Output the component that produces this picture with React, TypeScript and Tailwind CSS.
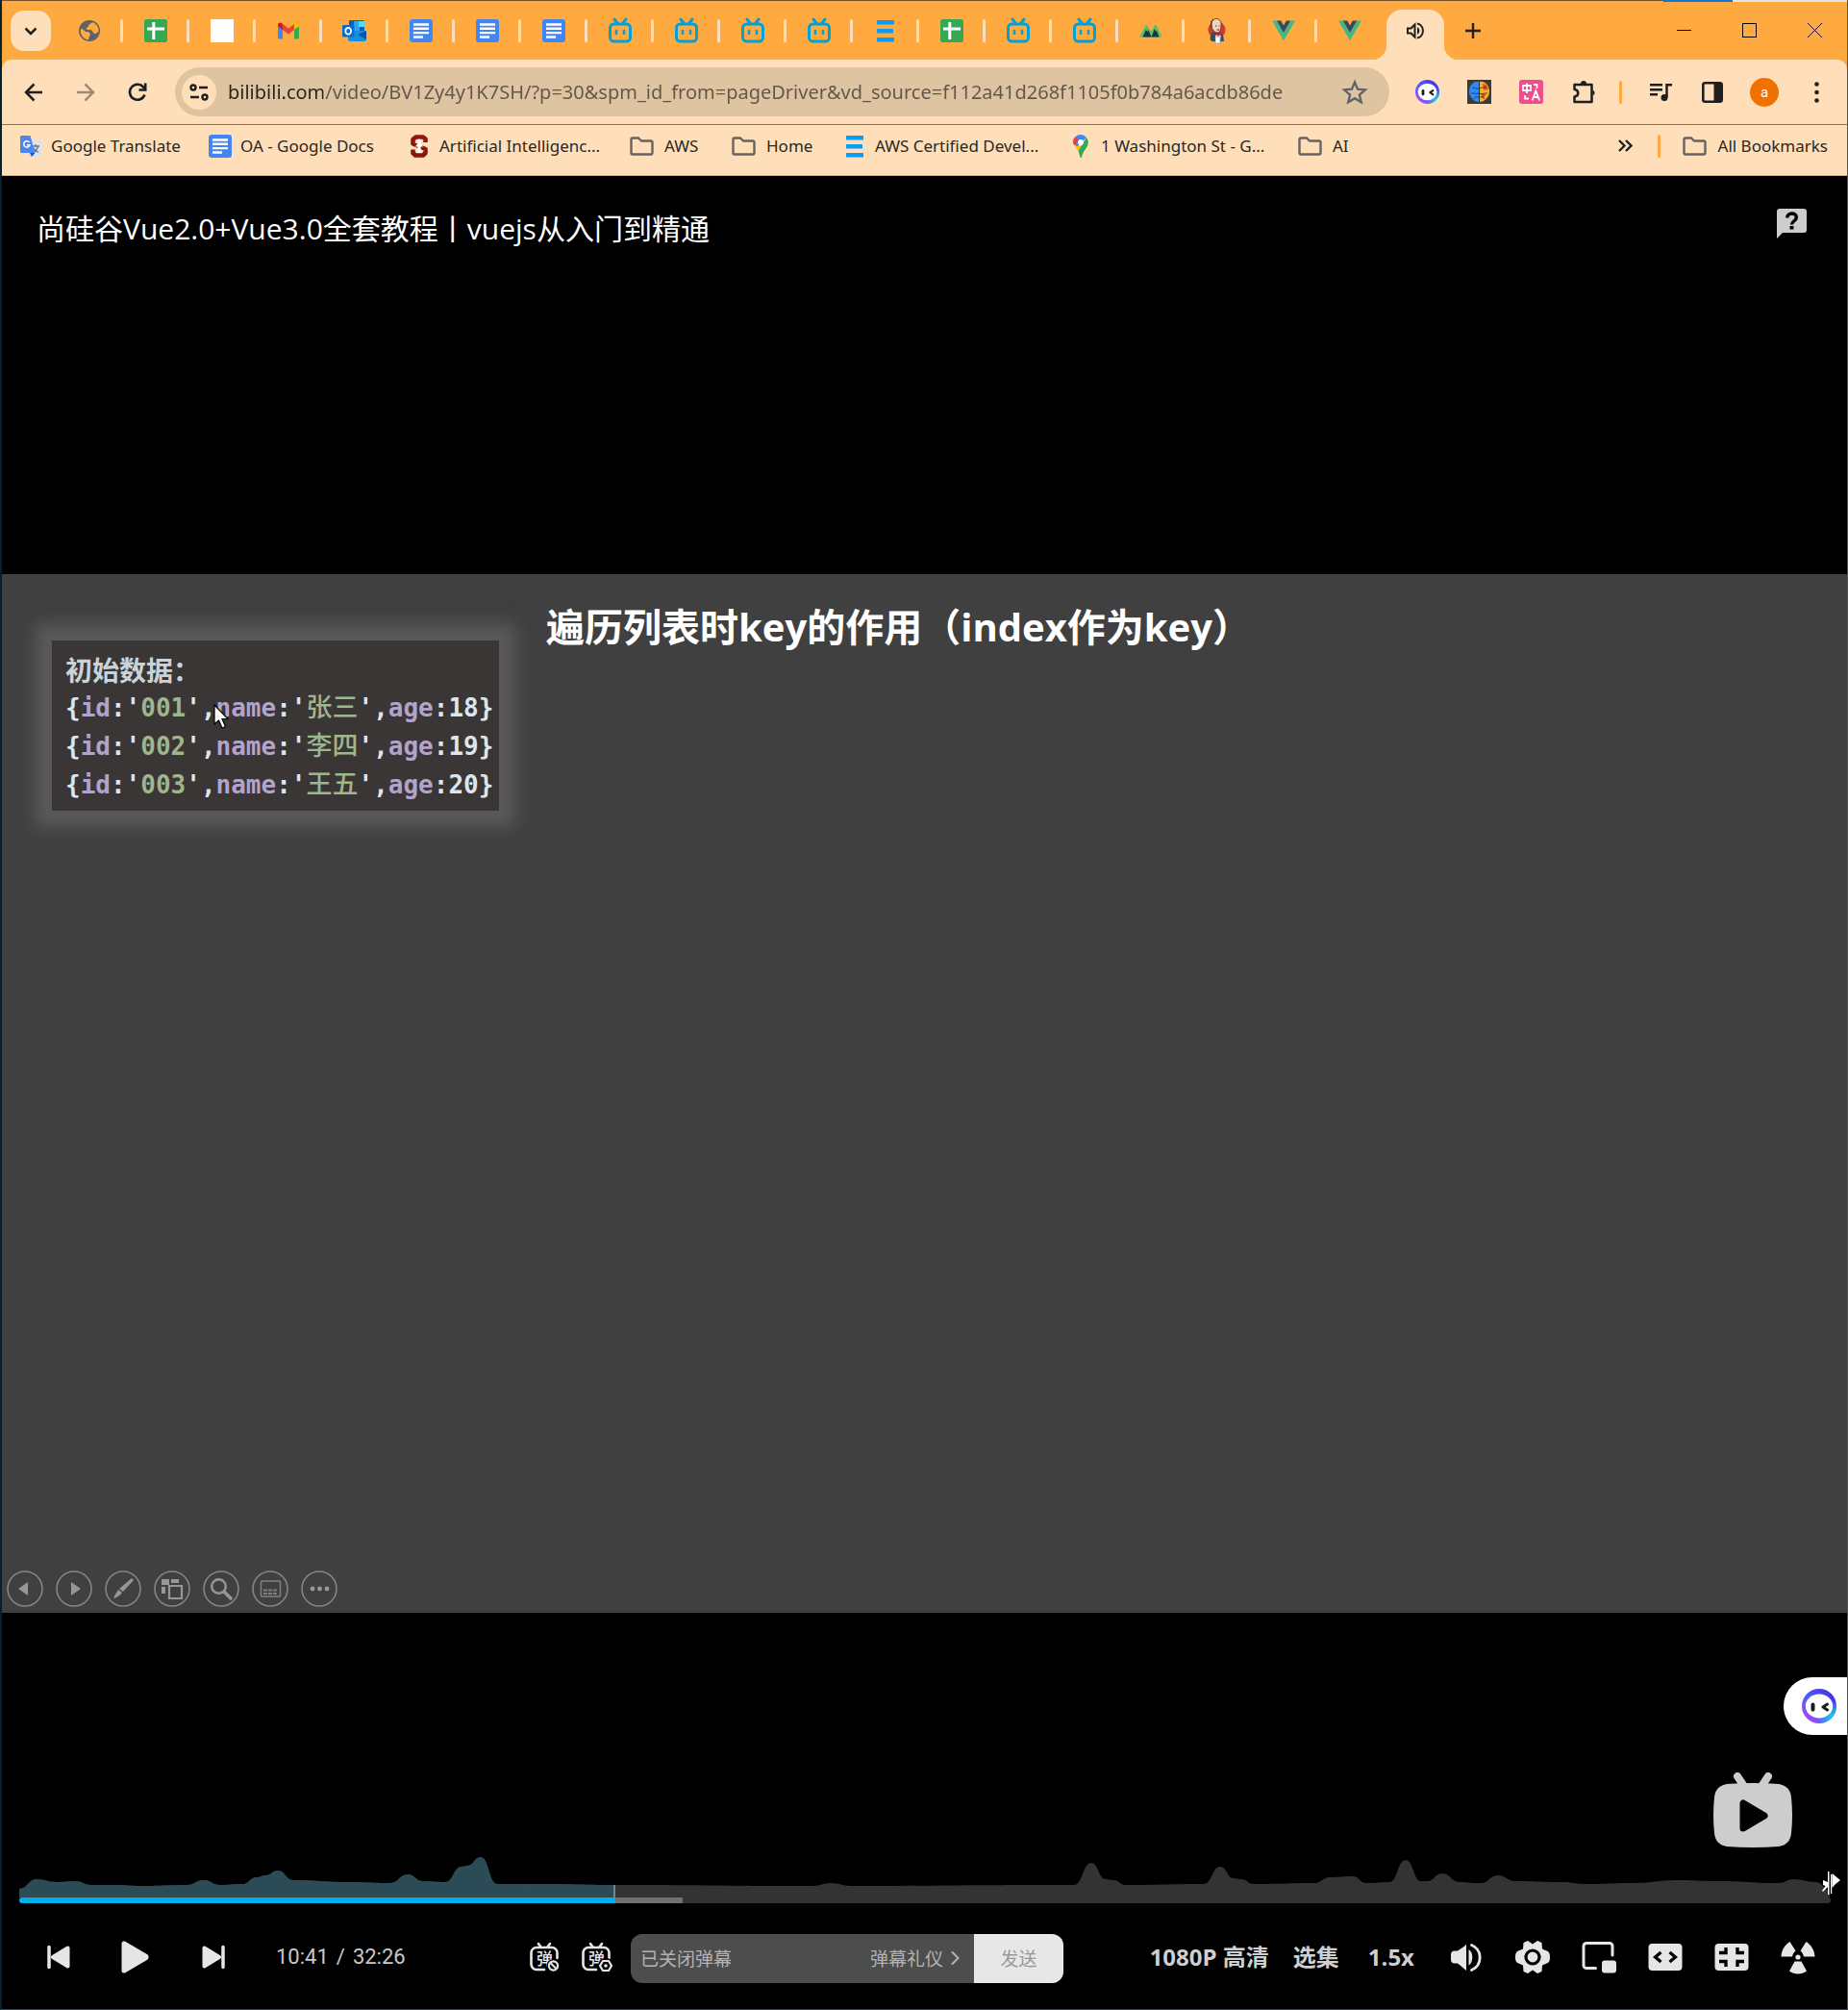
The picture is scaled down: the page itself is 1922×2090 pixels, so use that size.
import React, { ReactNode } from "react";

/* ---------- favicons ---------- */

const Bili = () => (
  <svg width="26" height="28" viewBox="0 0 26 28" fill="none" stroke="#00a1d6" strokeWidth="3" strokeLinecap="round">
    <path d="M7 2l3 4M19 2l-3 4" />
    <rect x="2.500" y="7" width="21" height="18" rx="4" />
    <path d="M9 14v3M17 14v3" strokeWidth="2.600" />
  </svg>
);

const Docs = () => (
  <svg width="24" height="24" viewBox="0 0 24 24">
    <rect width="24" height="24" rx="3" fill="#4285f4" />
    <path d="M4 5.500h16M4 9.800h16M4 14.100h16M4 18.500h10" stroke="#fff" strokeWidth="2.400" />
  </svg>
);

const Sheets = () => (
  <svg width="24" height="24" viewBox="0 0 24 24">
    <rect width="24" height="24" rx="2.500" fill="#34a853" />
    <path d="M3 10h18M9.800 3v18" stroke="#fff" strokeWidth="3" />
  </svg>
);

const Stripes = () => (
  <svg width="24" height="24" viewBox="0 0 24 24" fill="#0a9bf5">
    <rect x="3" y="1" width="18" height="4.500" rx="0.500" />
    <rect x="3" y="10" width="17" height="4.500" rx="0.500" />
    <rect x="3" y="19" width="18" height="4.500" rx="0.500" />
  </svg>
);

const Vue = () => (
  <svg width="24" height="22" viewBox="0 0 24 21">
    <path d="M0 0h4.800L12 12.400 19.200 0H24L12 20.700z" fill="#41b883" />
    <path d="M4.800 0h4.400L12 4.900 14.800 0h4.400L12 12.400z" fill="#35495e" />
  </svg>
);

const Globe = () => (
  <svg width="22" height="22" viewBox="0 0 22 22">
    <circle cx="11" cy="11" r="11" fill="#5f6368" />
    <path d="M2 9c4 0 3 3 6 3s5 2 3 5c-1 2-1 3-1 3.500A9.500 9.500 0 0 1 2 9zM14 2c-1 2-4 2-4 4 0 2-3 1-2 3s5 0 6 2 1 3 3 3 2-2 3.500-2A9.500 9.500 0 0 0 14 2z" fill="#ffaa40" />
  </svg>
);

const Gmail = () => (
  <svg width="22" height="18" viewBox="0 0 22 17">
    <path d="M0 3v12.500A1.500 1.500 0 0 0 1.500 17H5V7z" fill="#4285f4" />
    <path d="M22 3v12.500A1.500 1.500 0 0 1 20.500 17H17V7z" fill="#34a853" />
    <path d="M5 1.500v6L11 12l6-4.500v-6L11 6z" fill="#ea4335" />
    <path d="M17 1.500v6l5-3.800V2.300C22 .3 19.600-.8 18 .7z" fill="#fbbc04" />
    <path d="M0 2.300v1.400l5 3.800v-6L4 .7C2.400-.8 0 .3 0 2.300z" fill="#c5221f" />
  </svg>
);

const Outlook = () => (
  <svg width="25" height="22" viewBox="0 0 25 22">
    <rect x="7" y="0" width="16" height="12" rx="1" fill="#0364b8" />
    <rect x="12" y="1" width="6" height="10" fill="#28a8ea" />
    <rect x="17" y="1" width="6" height="6" fill="#50d9ff" />
    <path d="M6 11h19v9a2 2 0 0 1-2 2H8a2 2 0 0 1-2-2z" fill="#1490df" />
    <path d="M25 11v9l-9-5z" fill="#0f4fa0" />
    <rect x="0" y="5" width="12.500" height="12.500" rx="1" fill="#0a6cc9" />
    <ellipse cx="6.200" cy="11.200" rx="2.900" ry="3.400" fill="none" stroke="#fff" strokeWidth="1.800" />
  </svg>
);

const Peaks = () => (
  <svg width="24" height="14" viewBox="0 0 24 14">
    <path d="M0 13.500L7 0.500l5 7 5-7 7 13z" fill="#5dbe68" />
    <path d="M3.500 13.500L8 3l4.500 10.500zM12.500 13.500L16.500 3l4 10.500z" fill="#1f3347" />
    <path d="M5 4l2.300-3.500L10 5 8.500 8zM14.500 4L17 .5 19.500 5 18 8z" fill="#5dbe68" />
  </svg>
);

const Butler = () => (
  <svg width="20" height="26" viewBox="0 0 20 26">
    <circle cx="9.500" cy="12" r="9" fill="#d33833" />
    <path d="M3 23c-1-5 0-8 4-9l5 1 4 2 1 7H5z" fill="#335061" />
    <path d="M8 15l3 4 3-4-1 10H8z" fill="#fff" />
    <path d="M8 14l3 2 3-2v4l-3-1-3 1z" fill="#c22" />
    <path d="M4 7c0-4 2-6.500 5-6.500S14.500 3 14 8s-2 7-4 7-6-3-6-8z" fill="#f0d6b7" stroke="#333" strokeWidth="0.800" />
    <path d="M4 9C3 6 3.500 2 6 1M8 8h1.500M11.500 8h1M9.500 12h2.500" fill="none" stroke="#333" />
    <path d="M8 19h5v7H8z" fill="#fff" stroke="#666" strokeWidth="0.500" />
  </svg>
);

const Monica = ({ size }: { size: number }) => (
  <svg width={size} height={size} viewBox="0 0 36 36">
    <defs>
      <linearGradient id="ring" x1="0" y1="1" x2="1" y2="0">
        <stop offset="0" stopColor="#c63df0" />
        <stop offset="0.450" stopColor="#4a63fa" />
        <stop offset="1" stopColor="#4a1ee8" />
      </linearGradient>
      <radialGradient id="ringGlow" cx="0.900" cy="0.800" r="0.450">
        <stop offset="0" stopColor="#1fd3dc" />
        <stop offset="1" stopColor="#1fd3dc" stopOpacity="0" />
      </radialGradient>
    </defs>
    <circle cx="18" cy="18" r="18" fill="url(#ring)" />
    <circle cx="18" cy="18" r="18" fill="url(#ringGlow)" />
    <ellipse cx="18" cy="18" rx="14.200" ry="12.500" fill="#fff" />
    <path d="M11.500 16.500v5" stroke="#1b1b1b" strokeWidth="4" strokeLinecap="round" />
    <path d="M26.500 16l-4.500 3 4.500 3" fill="none" stroke="#1b1b1b" strokeWidth="3" strokeLinecap="round" strokeLinejoin="round" />
  </svg>
);

const Brain = () => (
  <svg width="25" height="25" viewBox="0 0 25 25">
    <rect width="25" height="25" fill="#3c3a38" />
    <path d="M12 2C7 1 2 6 2 12s5 11 10 11z" fill="#2f8cf0" />
    <path d="M13 2c5-1 10 4 10 10s-5 11-10 11z" fill="#fbb01f" />
    <path d="M16 4c3 0 5 2 6 6l-5 1zM14 14l6 1-4 5z" fill="#ea4630" />
    <path d="M12.500 2v21M5 8c3 0 4 2 7 1M4 14c3-1 4 2 8 0M7 20c1-3 3-2 5-2M20 7c-2 2-4 0-7 2M21 14c-3-1-5 2-8 0M18 20c-1-3-3-2-5-2" fill="none" stroke="#20304a" strokeWidth="0.800" />
  </svg>
);

const PinkTranslate = () => (
  <svg width="25" height="25" viewBox="0 0 25 25">
    <rect width="25" height="25" rx="3" fill="#f04d8b" />
    <path d="M4 6h8v5H4zM8 3.500V14M15 5h3.500v4M6 16v3.500h4M13.500 21.500l3.800-10 3.800 10M15 18h5" fill="none" stroke="#fff" strokeWidth="1.800" />
  </svg>
);

const GTranslate = () => (
  <svg width="24" height="24" viewBox="0 0 24 24">
    <rect x="9" y="6" width="14" height="17" rx="1.500" fill="#dfe3e6" />
    <path d="M13 12h8M17 10v2M19.500 12c-1 4-3 5.500-5 6.500M15 14c1 2 3 3.500 5 4.500" fill="none" stroke="#607d8b" strokeWidth="1.300" />
    <path d="M2.500 1h9l5 18h-14A1.500 1.500 0 0 1 1 17.500v-15A1.500 1.500 0 0 1 2.500 1z" fill="#4a87f0" />
    <path d="M11 19h5.500L13 23z" fill="#2350b8" />
    <path d="M10.500 8A3.200 3.200 0 1 0 11 10.800H8" fill="none" stroke="#fff" strokeWidth="1.500" />
  </svg>
);

const Stanford = () => (
  <svg width="24" height="24" viewBox="0 0 24 24" fill="none" strokeLinejoin="round">
    <path d="M18.500 8V4.500L16 2.500H8.500L5.500 5v4.500l13 5.500v4L16 21.500H8L5.500 19v-3.500" stroke="#8c1515" strokeWidth="4.600" />
    <path d="M12 4l2.500 4h-1.500l3 4.500h-2.500l.5 6.500h-4l.5-6.500H8L11 8H9.500z" fill="#fff" />
  </svg>
);

const MapPin = () => (
  <svg width="24" height="24" viewBox="0 0 24 24">
    <path d="M12 0a8 8 0 0 1 6 3L8 13 4 8A8 8 0 0 1 12 0z" fill="#4285f4" />
    <path d="M6.500 2.500L10 6l-4.500 5.500C3 8 4 4.500 6.500 2.500z" fill="#ea4335" />
    <path d="M12 12L6 12c1 2 2 3 3.500 5L16 9z" fill="#fbbc04" />
    <path d="M18 3c3 4 2 8-1 12-2 3-3 4-4 8.500-.3.700-1.200.7-1.500 0L9.500 17z" fill="#34a853" />
    <circle cx="12" cy="8" r="3" fill="#fff" />
  </svg>
);

const Folder = () => (
  <svg width="30" height="24" viewBox="0 0 30 24" fill="none" stroke="#666360" strokeWidth="2.400" strokeLinejoin="round">
    <path d="M4.500 5a1.500 1.500 0 0 1 1.500-1.500h6l3 3h10a1.500 1.500 0 0 1 1.500 1.500v11a1.500 1.500 0 0 1-1.500 1.500H6A1.500 1.500 0 0 1 4.500 19z" />
  </svg>
);

/* ---------- browser chrome ---------- */

const tabs: { name: string; icon: ReactNode }[] = [
  { name: "New page", icon: <Globe /> },
  { name: "Sheet", icon: <Sheets /> },
  { name: "Blank", icon: <span className="h-6 w-6 bg-white" /> },
  { name: "Gmail", icon: <Gmail /> },
  { name: "Outlook", icon: <Outlook /> },
  { name: "Document 1", icon: <Docs /> },
  { name: "Document 2", icon: <Docs /> },
  { name: "Document 3", icon: <Docs /> },
  { name: "bilibili 1", icon: <Bili /> },
  { name: "bilibili 2", icon: <Bili /> },
  { name: "bilibili 3", icon: <Bili /> },
  { name: "bilibili 4", icon: <Bili /> },
  { name: "Course", icon: <Stripes /> },
  { name: "Sheet 2", icon: <Sheets /> },
  { name: "bilibili 5", icon: <Bili /> },
  { name: "bilibili 6", icon: <Bili /> },
  { name: "Metrics", icon: <Peaks /> },
  { name: "Jenkins", icon: <Butler /> },
  { name: "Vue 1", icon: <Vue /> },
  { name: "Vue 2", icon: <Vue /> },
];

function TabStrip() {
  return (
    <div className="flex h-[60px] items-center">
      <button aria-label="Search tabs" className="ml-[9px] mr-[5px] grid h-[42px] w-[42px] shrink-0 place-items-center rounded-[14px] bg-[#ffdfb9]">
        <svg width="14" height="9" viewBox="0 0 14 9" fill="none" stroke="#1f1f1f" strokeWidth="2.500">
          <path d="M1.500 1.500L7 7l5.500-5.500" />
        </svg>
      </button>
      {tabs.map((t, i) => (
        <button key={t.name} aria-label={t.name} className="relative grid h-12 w-[69px] place-items-center">
          {t.icon}
          {i < tabs.length - 1 && <span className="absolute -right-px top-3 h-6 w-[3px] rounded-full bg-[#ffdfb9]" />}
        </button>
      ))}
      <button
        aria-label="Current tab, playing audio"
        className="relative ml-1 mt-2 grid h-[52px] w-[60px] shrink-0 place-items-center rounded-t-2xl bg-[#ffdfb9] before:absolute before:bottom-0 before:-left-4 before:size-4 before:bg-[radial-gradient(circle_at_0_0,transparent_16px,#ffdfb9_17px)] after:absolute after:bottom-0 after:-right-4 after:size-4 after:bg-[radial-gradient(circle_at_100%_0,transparent_16px,#ffdfb9_17px)]"
      >
        <svg className="mb-2" width="20" height="20" viewBox="0 0 20 20" fill="none" stroke="#1f1f1f" strokeWidth="2">
          <path d="M2 7.500h3.500L9.500 3.500v13L5.500 12.500H2z" />
          <path d="M12 6v8a4.500 4.500 0 0 0 0-8z" fill="#1f1f1f" stroke="none" />
          <path d="M12 2.500a7.700 7.700 0 0 1 0 15" />
        </svg>
      </button>
      <button aria-label="New tab" className="ml-[14px] grid size-8 shrink-0 place-items-center">
        <svg width="16" height="16" viewBox="0 0 16 16" stroke="#1f1f1f" strokeWidth="2.400">
          <path d="M8 0v16M0 8h16" />
        </svg>
      </button>
      <div className="ml-auto flex h-full items-center pb-px text-black">
        <button aria-label="Minimize" className="grid h-full w-[68px] place-items-center">
          <svg width="15" height="15" viewBox="0 0 15 15" stroke="currentColor"><path d="M0 7.500h15" /></svg>
        </button>
        <button aria-label="Maximize" className="grid h-full w-[68px] place-items-center">
          <span className="size-[15px] border border-black" />
        </button>
        <button aria-label="Close" className="grid h-full w-[68px] place-items-center">
          <svg width="15" height="15" viewBox="0 0 15 15" stroke="currentColor"><path d="M0 0l15 15M15 0L0 15" /></svg>
        </button>
      </div>
    </div>
  );
}

const ToolButton = ({ label, children }: { label: string; children: ReactNode }) => (
  <button aria-label={label} className="grid h-12 w-[54px] shrink-0 place-items-center">
    {children}
  </button>
);

function Toolbar() {
  return (
    <div className="flex h-[68px] items-center rounded-t-[10px] border-b border-[#84735f] bg-[#ffdfb9] pl-[6px] pr-[5px]">
      <ToolButton label="Back">
        <svg width="20" height="20" viewBox="0 0 20 20" fill="none" stroke="#1f1f1f" strokeWidth="2.500"><path d="M19 10H2.500M10.500 1.500L2 10l8.500 8.500" /></svg>
      </ToolButton>
      <ToolButton label="Forward">
        <svg width="20" height="20" viewBox="0 0 20 20" fill="none" stroke="#a08c76" strokeWidth="2.500"><path d="M1 10h16.500M9.500 1.500L18 10l-8.500 8.500" /></svg>
      </ToolButton>
      <ToolButton label="Reload">
        <svg width="22" height="22" viewBox="0 0 22 22" fill="none" stroke="#1f1f1f" strokeWidth="2.600">
          <path d="M18.500 13.500A8 8 0 1 1 17 5.500l2 2" />
          <path d="M19.200 1.500v7H12.500" />
        </svg>
      </ToolButton>
      <div className="ml-3 flex h-[51px] flex-1 items-center rounded-full bg-[#dfc4a1] pl-[7px] pr-[22px]">
        <button aria-label="Site information" className="grid size-9 shrink-0 place-items-center rounded-full bg-[#ffdfb9]">
          <svg width="20" height="18" viewBox="0 0 20 18" fill="none" stroke="#1f1f1f" strokeWidth="2.400">
            <circle cx="4" cy="4" r="2.500" /><path d="M10 4h9M1 14h9" /><circle cx="16" cy="14" r="2.500" />
          </svg>
        </button>
        <input
          aria-label="Address"
          readOnly
          className="ml-3 h-9 min-w-0 flex-1 bg-[linear-gradient(90deg,#262320_99px,#62564a_99px)] bg-clip-text font-['Noto_Sans',sans-serif] text-[20px] leading-9 text-transparent outline-none"
          value="bilibili.com/video/BV1Zy4y1K7SH/?p=30&spm_id_from=pageDriver&vd_source=f112a41d268f1105f0b784a6acdb86de"
        />
        <button aria-label="Bookmark this page" className="shrink-0">
          <svg width="28" height="28" viewBox="0 0 24 24" fill="none" stroke="#5f6368" strokeWidth="2">
            <path d="M12 3l2.600 6.200 6.700.600-5.100 4.400 1.600 6.600L12 17.300l-5.800 3.500 1.600-6.600L2.700 9.800l6.700-.6z" />
          </svg>
        </button>
      </div>
      <div className="ml-3 flex items-center">
        <ToolButton label="Monica"><Monica size={25} /></ToolButton>
        <ToolButton label="Brain"><Brain /></ToolButton>
        <ToolButton label="Translate"><PinkTranslate /></ToolButton>
        <ToolButton label="Extensions">
          <svg width="26" height="26" viewBox="-2 0 26 26" fill="none" stroke="#1f1f1f" strokeWidth="2.500" strokeLinejoin="round" overflow="visible">
            <path d="M2.500 5h18v18h-18v-5.500c5-.5 5-7 0-7.500z" />
            <path d="M9 4a3 3 0 0 1 6 0zM21.500 10.500a3.200 3.200 0 0 1 0 6z" fill="#1f1f1f" stroke="none" />
          </svg>
        </ToolButton>
      </div>
      <span className="ml-[11px] mr-[13px] h-6 w-[3px] rounded-full bg-[#ffaa40]" />
      <div className="flex items-center">
        <ToolButton label="Media controls">
          <svg width="24" height="20" viewBox="0 0 24 20" fill="none" stroke="#1f1f1f" strokeWidth="2.500">
            <path d="M1 2.200h13M1 7.200h13M1 12.200h8M18.500 15V2.200H24" />
            <circle cx="16" cy="15.500" r="3.500" fill="#1f1f1f" stroke="none" />
          </svg>
        </ToolButton>
        <ToolButton label="Side panel">
          <svg width="22" height="22" viewBox="0 0 22 22">
            <rect x="1.300" y="1.300" width="19.400" height="19.400" rx="2" fill="none" stroke="#1f1f1f" strokeWidth="2.600" />
            <path d="M12.500 1h8v20h-8z" fill="#1f1f1f" />
          </svg>
        </ToolButton>
        <ToolButton label="Profile">
          <span className="grid size-[30px] place-items-center rounded-full bg-[#f07000] font-[Roboto,sans-serif] text-[15px] leading-5 text-white">a</span>
        </ToolButton>
        <ToolButton label="Menu">
          <svg width="5" height="22" viewBox="0 0 5 22" fill="#1f1f1f">
            <circle cx="2.500" cy="2.500" r="2.300" /><circle cx="2.500" cy="11" r="2.300" /><circle cx="2.500" cy="19.500" r="2.300" />
          </svg>
        </ToolButton>
      </div>
    </div>
  );
}

const bookmarks = [
  { label: "Google Translate", icon: <GTranslate />, width: "w-[166px]" },
  { label: "OA - Google Docs", icon: <Docs />, width: "w-[176px]" },
  { label: "Artificial Intelligenc...", icon: <Stanford />, width: "w-[197px]" },
  { label: "AWS", icon: <Folder />, width: "w-[75px]" },
  { label: "Home", icon: <Folder />, width: "w-[88px]" },
  { label: "AWS Certified Devel...", icon: <Stripes />, width: "w-[204px]" },
  { label: "1 Washington St - G...", icon: <MapPin />, width: "w-[204px]" },
  { label: "AI", icon: <Folder />, width: "w-[60px]" },
];

function BookmarksBar() {
  return (
    <nav className="flex h-[53px] items-center border-b border-[#c9b090] bg-[#ffdfb9] pb-[9px] pl-[18px] pr-5 font-['Noto_Sans',sans-serif] text-[17px] leading-6 text-[#2b2622]">
      <div className="flex gap-[31px]">
        {bookmarks.map((b) => (
          <a key={b.label} href="#" className={`flex items-center gap-[9px] whitespace-nowrap ${b.width}`}>
            <span className="shrink-0">{b.icon}</span>
            {b.label}
          </a>
        ))}
      </div>
      <button aria-label="More bookmarks" className="ml-auto mr-[26px]">
        <svg width="15" height="13" viewBox="0 0 15 13" fill="none" stroke="#1f1f1f" strokeWidth="2.300"><path d="M1 1l5.500 5.500L1 12M8 1l5.500 5.500L8 12" /></svg>
      </button>
      <span className="mr-5 h-6 w-[3px] rounded-full bg-[#ffaa40]" />
      <a href="#" className="flex items-center gap-[10px] whitespace-nowrap">
        <Folder />
        All Bookmarks
      </a>
    </nav>
  );
}

/* ---------- slide ---------- */

const people = [
  { id: "001", name: "张三", age: 18 },
  { id: "002", name: "李四", age: 19 },
  { id: "003", name: "王五", age: 20 },
];

const slideTools: { name: string; icon: ReactNode }[] = [
  { name: "Previous slide", icon: <path d="M12 19l10-7v14z" fill="#979797" /> },
  { name: "Next slide", icon: <path d="M26 19l-10-7v14z" fill="#979797" /> },
  { name: "Pen", icon: <path d="M28 8l2 2-11 12-4-3zM14 20l4 3c-3 4-6 5-9 6 1-3 3-6 5-9z" fill="#979797" /> },
  {
    name: "All slides",
    icon: (
      <>
        <path d="M8 9h8v6H8zM18 9h8v4h-8zM8 17h4v7H8z" fill="#979797" />
        <path d="M16 16h13v13H16z" fill="#404040" stroke="#979797" strokeWidth="2.200" />
      </>
    ),
  },
  {
    name: "Zoom",
    icon: (
      <>
        <circle cx="16.500" cy="16.500" r="7.300" fill="none" stroke="#979797" strokeWidth="2.400" />
        <path d="M22 22l7 7" stroke="#979797" strokeWidth="3.600" strokeLinecap="round" />
      </>
    ),
  },
  {
    name: "Subtitles",
    icon: (
      <>
        <rect x="9.500" y="11" width="20" height="16" rx="1" fill="none" stroke="#808080" strokeWidth="1.500" />
        <path d="M12 20.500h15M12 24h15" stroke="#808080" strokeWidth="1.800" strokeDasharray="4 1" />
      </>
    ),
  },
  {
    name: "More",
    icon: (
      <g fill="#979797">
        <circle cx="12" cy="19" r="2.400" /><circle cx="19.500" cy="19" r="2.400" /><circle cx="27" cy="19" r="2.400" />
      </g>
    ),
  },
];

function Slide() {
  return (
    <section className="relative flex aspect-video w-full flex-col bg-[#404040]">
      <div className="flex items-start">
        <div className="ml-[52px] mt-[69px] h-[177px] w-[465px] shrink-0 bg-[#3a3636] pl-[14px] pt-[10px] font-['DejaVu_Sans_Mono','Noto_Sans_CJK_SC',monospace] text-[26px] font-bold leading-10 text-[#dfe5ea] shadow-[0_0_16px_17px_#5a5a5a]">
          <p className="font-['Noto_Sans_CJK_SC',sans-serif] text-[28px] text-[#c9d3d8]">初始数据：</p>
          {people.map((p) => (
            <p key={p.id} className="whitespace-nowrap">
              {"{"}
              <span className="text-[#b3a3c9]">id</span>:'<span className="text-[#9fb58c]">{p.id}</span>',
              <span className="text-[#b3a3c9]">name</span>:'
              <span className="text-[27px] font-medium text-[#9fb58c]">{p.name}</span>',
              <span className="text-[#b3a3c9]">age</span>:{p.age}
              {"}"}
            </p>
          ))}
        </div>
        <h2 className="ml-[49px] mt-[25px] whitespace-nowrap font-['Open_Sans','Noto_Sans_CJK_SC',sans-serif] text-[40px] font-bold leading-[60px] text-white">
          遍历列表时key的作用（index作为key）
        </h2>
      </div>
      <svg className="absolute left-[220px] top-[135px]" width="16" height="26" viewBox="0 0 16 26">
        <path d="M1 1v20l4.500-4 3.500 8 3.500-1.500-3.500-8h6z" fill="#fff" stroke="#000" strokeWidth="1.200" />
      </svg>
      <div className="mb-[6px] ml-[5px] mt-auto flex gap-[13px]">
        {slideTools.map((t) => (
          <button key={t.name} aria-label={t.name}>
            <svg width="38" height="38" viewBox="0 0 38 38">
              <circle cx="19" cy="19" r="18" fill="none" stroke="#858585" strokeWidth="1.600" />
              {t.icon}
            </svg>
          </button>
        ))}
      </div>
    </section>
  );
}

/* ---------- player ---------- */

/* Popularity curve: x along the track, y measured from the top of the graph. */
const heat: [number, number][] = [
  [0, 35], [18, 25], [39, 28], [58, 27], [75, 31], [98, 31], [127, 32], [174, 31], [192, 26], [209, 31], [232, 30],
  [247, 23], [256, 21], [269, 16], [285, 26], [342, 28], [386, 29], [404, 20], [420, 27], [443, 28], [460, 12],
  [466, 11], [480, 2], [497, 30], [544, 30], [620, 31], [825, 32], [844, 29], [865, 32], [1080, 31], [1097, 31],
  [1115, 8], [1130, 25], [1138, 26], [1151, 31], [1232, 30], [1249, 12], [1263, 24], [1271, 25], [1284, 30],
  [1347, 29], [1363, 23], [1387, 22], [1401, 29], [1425, 28], [1442, 5], [1458, 27], [1464, 27], [1480, 19],
  [1498, 28], [1520, 29], [1538, 21], [1556, 27], [1604, 28], [1630, 30], [1678, 29], [1725, 26], [1767, 27],
  [1830, 29], [1845, 25], [1869, 28], [1883, 37],
];

const heatPath =
  "M0 44L0 35" +
  heat
    .slice(1)
    .map(([x, y], i) => {
      const [px, py] = heat[i];
      const mx = (px + x) / 2;
      return `C${mx} ${py} ${mx} ${y} ${x} ${y}`;
    })
    .join("") +
  "V44Z";

function Progress() {
  return (
    <div className="relative mx-[18px] mr-[17px]">
      <svg className="block h-11 w-full" viewBox="0 0 1884 44" preserveAspectRatio="none">
        <defs>
          <clipPath id="played"><rect width="620" height="44" /></clipPath>
        </defs>
        <path d={heatPath} fill="#333" />
        <path d={heatPath} fill="#2b4b57" clipPath="url(#played)" />
        <path d="M528 30v14" stroke="#3a4a50" />
        <path d="M619 31v13" stroke="#74868c" strokeWidth="2" />
      </svg>
      <div className="flex h-[6px] overflow-hidden rounded-sm bg-[#333]">
        <span className="w-[32.900%] bg-[#00aeec]" />
        <span className="w-[3.700%] bg-[#717171]" />
      </div>
      <input type="range" aria-label="Seek" min={0} max={1946} defaultValue={641} className="absolute inset-x-0 bottom-0 h-2 w-full opacity-0" />
      <svg className="absolute -right-[11px] bottom-[9px]" width="20" height="24" viewBox="0 0 20 24" fill="#fff">
        <path d="M6 0h1.500v24H6zM1 9l5 2v5l-5 5-1-1 3.500-5L1 14zM9 3h1.200v20H9zM10.500 2L19 9l-5 4-3.500 4z" />
      </svg>
    </div>
  );
}

const DanmakuIcon = ({ badge }: { badge: ReactNode }) => (
  <svg width="34" height="32" viewBox="0 0 34 32" fill="none" stroke="#e6e6e6" strokeWidth="2.600" strokeLinecap="round">
    <path d="M10 2l2.500 3.500M22 2l-2.500 3.500" />
    <path d="M16 29H8a5.500 5.500 0 0 1-5.500-5.500v-12A5.500 5.500 0 0 1 8 6h16a5.500 5.500 0 0 1 5.500 5.500V17" />
    <text x="8" y="24" fontSize="17" fontWeight="500" fontFamily="Noto Sans CJK SC, sans-serif" fill="#e6e6e6" stroke="none">弹</text>
    {badge}
  </svg>
);

function Controls() {
  return (
    <div className="flex items-center pb-[27px] pl-[43px] pr-[31px] pt-8 text-[#cfcfcf]">
      <div className="flex shrink-0 items-center pb-[3px]">
        <button aria-label="Previous">
          <svg width="32" height="32" viewBox="0 0 32 32" fill="#e6e6e6" stroke="#e6e6e6" strokeLinejoin="round" strokeLinecap="round">
            <path d="M6 5.500v21" strokeWidth="3.500" /><path d="M25.500 6.500v19L10 16z" strokeWidth="4" />
          </svg>
        </button>
        <button aria-label="Play" className="ml-[45px]">
          <svg width="36" height="36" viewBox="0 0 36 36" fill="#e6e6e6" stroke="#e6e6e6" strokeWidth="5" strokeLinejoin="round">
            <path d="M7 4v28L30 18.500v-1z" />
          </svg>
        </button>
        <button aria-label="Next" className="ml-12">
          <svg width="32" height="32" viewBox="0 0 32 32" fill="#e6e6e6" stroke="#e6e6e6" strokeLinejoin="round" strokeLinecap="round">
            <path d="M26 5.500v21" strokeWidth="3.500" /><path d="M6.500 6.500v19L22 16z" strokeWidth="4" />
          </svg>
        </button>
        <div className="ml-[49px] flex w-[140px] gap-2 font-[Roboto,sans-serif] text-[22px] leading-8 text-[#c8c8c8]">
          <span>10:41</span>
          <span>/</span>
          <span>32:26</span>
        </div>
        <button aria-label="开启弹幕" className="ml-[123px]">
          <DanmakuIcon
            badge={
              <>
                <circle cx="25.500" cy="25" r="7" fill="#000" stroke="none" />
                <circle cx="25.500" cy="25" r="4.600" strokeWidth="2.200" />
                <path d="M22.500 22l6 6" strokeWidth="2" />
              </>
            }
          />
        </button>
        <button aria-label="弹幕设置" className="ml-5">
          <DanmakuIcon
            badge={
              <>
                <circle cx="26" cy="25" r="8" fill="#000" stroke="none" />
                <path d="M23 20h6l3 5-3 5h-6l-3-5z" strokeWidth="2.200" strokeLinejoin="round" />
                <circle cx="26" cy="25" r="1.800" fill="#e6e6e6" stroke="none" />
              </>
            }
          />
        </button>
      </div>
      <form className="ml-[18px] flex h-[51px] w-[450px] shrink-0 overflow-hidden rounded-xl bg-[#4d4d4d] font-['Noto_Sans_CJK_SC',sans-serif] text-[19px] leading-7">
        <input disabled aria-label="弹幕" placeholder="已关闭弹幕" className="min-w-0 flex-1 pb-0.5 pl-[10px] placeholder:text-[#b3b3b3]" />
        <a href="#" className="flex items-center gap-2 pb-0.5 pr-[15px] text-[#b3b3b3]">
          弹幕礼仪
          <svg width="9" height="16" viewBox="0 0 9 16" fill="none" stroke="currentColor" strokeWidth="2" strokeLinecap="round"><path d="M1.500 2L7.500 8l-6 6" /></svg>
        </a>
        <button type="button" className="w-[93px] bg-[#e7e7e7] pb-0.5 text-[#999]">发送</button>
      </form>
      <div className="ml-auto flex items-center pb-[3px] font-['Open_Sans','Noto_Sans_CJK_SC',sans-serif] text-[24px] font-bold leading-8">
        <button className="whitespace-nowrap">1080P 高清</button>
        <button className="ml-[25px] whitespace-nowrap">选集</button>
        <button className="ml-[30px] whitespace-nowrap">1.5x</button>
        <div className="ml-[34px] flex items-center gap-[29px]">
          <button aria-label="音量">
            <svg width="40" height="40" viewBox="0 0 40 40" fill="#e6e6e6">
              <path d="M20 7v27c0 0-7-6-9-7.500H8a4 4 0 0 1-4-4v-5a4 4 0 0 1 4-4h3C14 12 20 7 20 7z" />
              <path d="M22.500 12c5 2.500 5 14 0 16.500z" />
              <path d="M25.500 7.500c11.500 5 11.500 21 0 26" fill="none" stroke="#e6e6e6" strokeWidth="2.800" strokeLinecap="round" />
            </svg>
          </button>
          <button aria-label="设置">
            <svg width="40" height="40" viewBox="0 0 40 40">
              <path d="M15 3l5 3.500L25 3l4.500 2 .5 6.500 3.500 1.500c3.500 1 4.500 3 4.500 7s-1 6-4.500 7L30 28.500l-.5 6.500-4.500 2-5-3.500L15 37l-4.500-2-.5-6.500L6.500 27C3 26 2 24 2 20s1-6 4.500-7l3.500-1.500.5-6.500z" fill="#e6e6e6" />
              <circle cx="20" cy="20" r="7" fill="none" stroke="#000" strokeWidth="3.200" />
            </svg>
          </button>
          <button aria-label="画中画">
            <svg width="40" height="40" viewBox="0 0 40 40">
              <path d="M16.500 31.500H7a3 3 0 0 1-3-3v-20a3 3 0 0 1 3-3h24a3 3 0 0 1 3 3v9.500" fill="none" stroke="#e6e6e6" strokeWidth="3" strokeLinecap="round" />
              <rect x="23" y="23.500" width="15" height="13" rx="3" fill="#e6e6e6" />
            </svg>
          </button>
          <button aria-label="宽屏">
            <svg width="40" height="40" viewBox="0 0 40 40">
              <rect x="2.500" y="6" width="35" height="28" rx="4" fill="#e6e6e6" />
              <path d="M15.500 15L9.500 20l6 5M24.500 15l6 5-6 5" fill="none" stroke="#000" strokeWidth="3.200" />
            </svg>
          </button>
          <button aria-label="网页全屏">
            <svg width="40" height="40" viewBox="0 0 40 40">
              <rect x="2.500" y="6" width="35" height="28" rx="4" fill="#e6e6e6" />
              <path d="M7 15.500h7V10M33 15.500h-7V10M7 24.500h7V30M33 24.500h-7V30" fill="none" stroke="#000" strokeWidth="3.400" />
            </svg>
          </button>
          <button aria-label="退出全屏">
            <svg width="40" height="40" viewBox="0 0 40 40" fill="#e6e6e6">
              <path d="M11.500 4c-5 3.500-8.500 8-9 15.500h11.500c.5-3 2-4.500 3.500-6zM28.500 4c5 3.500 8.500 8 9 15.500H26c-.5-3-2-4.500-3.500-6z" />
              <path d="M16.500 24.500h7l5.500 10c-5 4-13 4-18 0z" />
              <circle cx="20" cy="20" r="2.600" />
            </svg>
          </button>
        </div>
      </div>
    </div>
  );
}

export default function App() {
  return (
    <div className="flex min-h-screen flex-col border-b border-l-2 border-r border-b-[#37474f] border-l-[#04222c] border-r-[#555] bg-black">
      <header className="bg-[#ffaa40]">
        <div className="flex h-[2px] items-start">
          <span className="h-px flex-1 bg-[#76522b]" />
          <span className="h-full w-[72px] bg-[#0a78d6]" />
          <span className="h-full w-[119px] bg-[#e4e4e4]" />
        </div>
        <TabStrip />
        <Toolbar />
        <BookmarksBar />
      </header>
      <main className="flex flex-1 flex-col pt-[2px]">
        <div className="flex flex-1 basis-0 items-start justify-between">
          <h1 className="ml-9 mt-[31px] whitespace-nowrap font-['Open_Sans','Noto_Sans_CJK_SC',sans-serif] text-[30px] leading-[44px] text-white">
            尚硅谷Vue2.0+Vue3.0全套教程丨vuejs从入门到精通
          </h1>
          <button aria-label="反馈" className="mr-[42px] mt-8">
            <svg width="31" height="31" viewBox="0 0 31 31">
              <path d="M3 0h25a3 3 0 0 1 3 3v19a3 3 0 0 1-3 3H6l-6 6V3a3 3 0 0 1 3-3z" fill="#cdcdcd" />
              <path d="M10.800 9.500c0-6 9.500-6 9.500-.5 0 4-4.700 3.500-4.700 7.500" fill="none" stroke="#000" strokeWidth="3.400" />
              <path d="M13.500 18h4v3.500h-4z" />
            </svg>
          </button>
        </div>
        <Slide />
        <div className="flex flex-1 basis-0 flex-col">
          <button aria-label="Monica" className="mt-[67px] flex h-[60px] w-[66px] items-center self-end rounded-l-full bg-white pl-[19px]">
            <Monica size={36} />
          </button>
          <svg className="mr-[57px] mt-[39px] self-end" width="82" height="78" viewBox="0 0 82 78">
            <path d="M25 4l6 9M57 4l-6 9" stroke="#cdcdcd" strokeWidth="8" strokeLinecap="round" />
            <path d="M14 12q27-2 54 0 12 2 13 14 2 19 0 37-1 12-13 14-27 2-54 0Q2 75 1 63q-2-18 0-37 1-12 13-14z" fill="#cdcdcd" />
            <path d="M31 32v26l22-13z" fill="#000" stroke="#000" strokeWidth="7" strokeLinejoin="round" />
          </svg>
          <div className="mt-auto">
            <Progress />
            <Controls />
          </div>
        </div>
      </main>
    </div>
  );
}
